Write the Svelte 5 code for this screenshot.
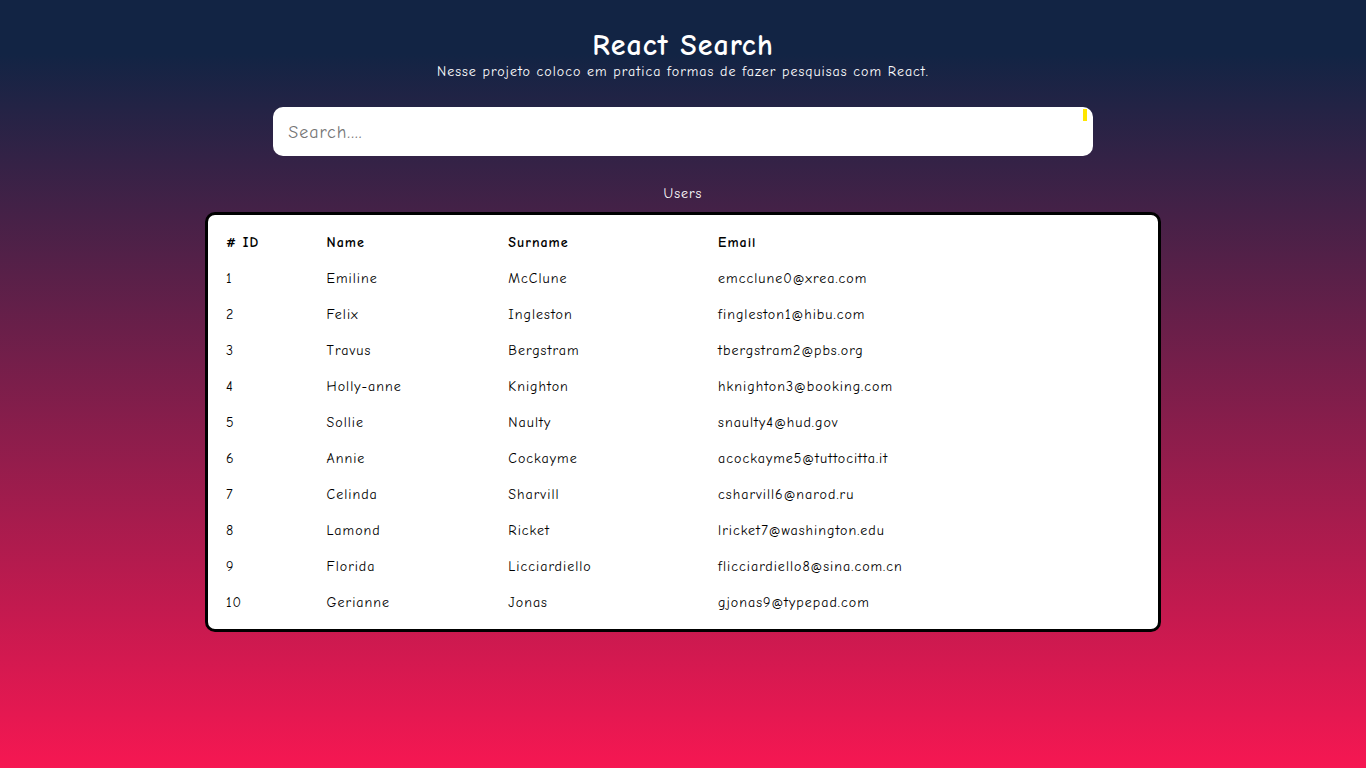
<script>
  const users = [
    { id: 1, name: 'Emiline', surname: 'McClune', email: 'emcclune0@xrea.com' },
    { id: 2, name: 'Felix', surname: 'Ingleston', email: 'fingleston1@hibu.com' },
    { id: 3, name: 'Travus', surname: 'Bergstram', email: 'tbergstram2@pbs.org' },
    { id: 4, name: 'Holly-anne', surname: 'Knighton', email: 'hknighton3@booking.com' },
    { id: 5, name: 'Sollie', surname: 'Naulty', email: 'snaulty4@hud.gov' },
    { id: 6, name: 'Annie', surname: 'Cockayme', email: 'acockayme5@tuttocitta.it' },
    { id: 7, name: 'Celinda', surname: 'Sharvill', email: 'csharvill6@narod.ru' },
    { id: 8, name: 'Lamond', surname: 'Ricket', email: 'lricket7@washington.edu' },
    { id: 9, name: 'Florida', surname: 'Licciardiello', email: 'flicciardiello8@sina.com.cn' },
    { id: 10, name: 'Gerianne', surname: 'Jonas', email: 'gjonas9@typepad.com' }
  ];

  let query = $state('');
  const found = $derived(
    users.filter((u) =>
      `${u.name} ${u.surname} ${u.email}`.toLowerCase().includes(query.trim().toLowerCase())
    )
  );
</script>

<main>
  <header>
    <h1>React Search</h1>
    <p>Nesse projeto coloco em pratica formas de fazer pesquisas com React.</p>
  </header>

  <div class="search">
    <input type="text" placeholder="Search...." aria-label="Search" bind:value={query} />
    <span class="marker"></span>
  </div>

  <h2 id="users-title">Users</h2>

  <div class="panel">
    <table aria-labelledby="users-title">
      <colgroup>
        <col class="id" />
        <col class="name" />
        <col class="surname" />
        <col />
      </colgroup>
      <thead>
        <tr>
          <th scope="col"># ID</th>
          <th scope="col">Name</th>
          <th scope="col">Surname</th>
          <th scope="col">Email</th>
        </tr>
      </thead>
      <tbody>
        {#each found as user (user.id)}
          <tr>
            <td>{user.id}</td>
            <td>{user.name}</td>
            <td>{user.surname}</td>
            <td>{user.email}</td>
          </tr>
        {/each}
      </tbody>
    </table>
  </div>
</main>

<style>
  :global(body) {
    margin: 0;
  }

  main {
    box-sizing: border-box;
    min-height: 100vh;
    padding: 30px 0;
    display: flex;
    flex-direction: column;
    align-items: center;
    background: linear-gradient(180deg, #122444 7%, #f61752 100%);
    color: #fff;
    font-family: 'Comic Sans MS', 'Comic Neue', 'Open Sans', sans-serif;
    font-size: 14px;
    line-height: 20px;
    letter-spacing: 1px;
  }

  header {
    text-align: center;
  }

  h1 {
    margin: 0;
    font-size: 30px;
    line-height: 32px;
    font-weight: 700;
  }

  p {
    margin: 0;
  }

  .search {
    position: relative;
    width: 60%;
    margin-top: 25px;
  }

  input {
    display: block;
    box-sizing: border-box;
    width: 100%;
    height: 49px;
    padding: 2px 15px 0;
    border: 0;
    border-radius: 10px;
    background: #fff;
    color: #000;
    font: inherit;
    font-size: 18px;
    letter-spacing: inherit;
    outline: 0;
  }

  input::placeholder {
    color: #757575;
  }

  .marker {
    position: absolute;
    top: 2px;
    right: 6px;
    width: 4px;
    height: 12px;
    background: #ffe600;
  }

  h2 {
    margin: 28px 0 8px;
    font-size: 14px;
    font-weight: 400;
  }

  .panel {
    box-sizing: border-box;
    width: 70%;
    padding: 10px 9px 8px;
    border: 3px solid #000;
    border-radius: 10px;
    background: #fff;
    color: #000;
  }

  table {
    width: 100%;
    border-collapse: collapse;
    table-layout: fixed;
  }

  .id {
    width: 10.8%;
  }

  .name {
    width: 19.5%;
  }

  .surname {
    width: 22.5%;
  }

  th,
  td {
    padding: 8px 9px;
    text-align: left;
  }
</style>
